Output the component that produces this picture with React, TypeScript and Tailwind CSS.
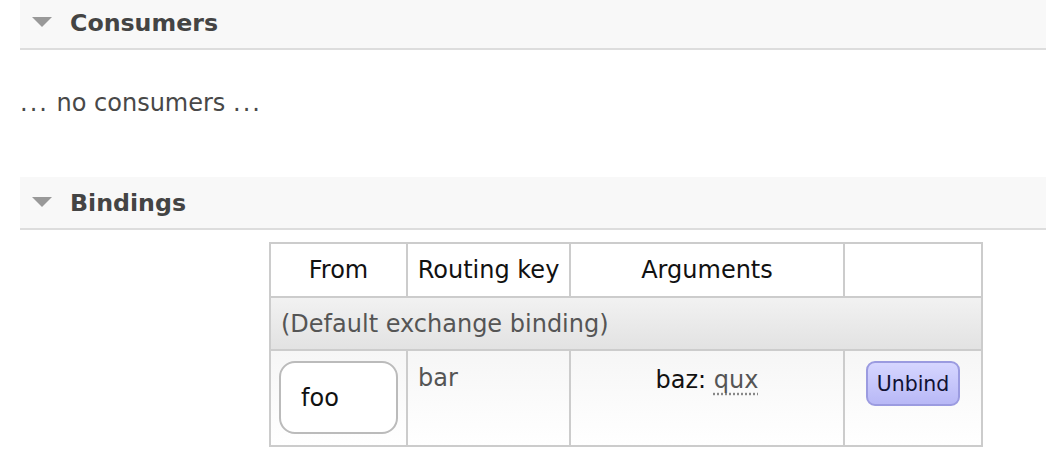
import React from 'react';

function SectionHeader({ title, className = '' }: { title: string; className?: string }) {
  return (
    <div className={`ml-[20px] h-[53px] flex items-center bg-[#f8f8f8] border-b-2 border-[#dddddd] ${className}`}>
      <svg width="20" height="11" viewBox="0 0 20 11" className="ml-[12px] mr-[18px]">
        <polygon points="0,0 20,0 10,10" fill="#999999" />
      </svg>
      <h2 className="font-bold text-[#444444] text-[23.7px]">{title}</h2>
    </div>
  );
}

export default function App() {
  return (
    <div
      className="bg-white w-[1046px] h-[468px] overflow-hidden text-[24px] leading-[28px] text-[#484848]"
      style={{ fontFamily: '"DejaVu Sans", Verdana, sans-serif' }}
    >
      {/* Consumers */}
      <SectionHeader title="Consumers" className="-mt-[3px]" />
      <p className="ml-[20px] mt-[39px]">
        <span className="tracking-[2px]">...</span> no consumers <span className="tracking-[2px]">...</span>
      </p>

      {/* Bindings */}
      <SectionHeader title="Bindings" className="mt-[60px]" />
      <table className="ml-[269px] mt-[12px] border-collapse border-2 border-[#cccccc]">
        <thead>
          <tr className="h-[54px] bg-white text-[#111111]">
            <th className="w-[137px] border-2 border-[#cccccc] font-normal">From</th>
            <th className="w-[163px] border-2 border-[#cccccc] font-normal">Routing key</th>
            <th className="w-[274px] border-2 border-[#cccccc] font-normal">Arguments</th>
            <th className="w-[138px] border-2 border-[#cccccc] font-normal"></th>
          </tr>
        </thead>
        <tbody>
          <tr className="h-[53px] bg-gradient-to-b from-[#f2f2f2] to-[#e2e2e2]">
            <td colSpan={4} className="border-2 border-[#cccccc] pl-[10px] text-[#555555]">
              (Default exchange binding)
            </td>
          </tr>
          <tr className="h-[96px] bg-gradient-to-b from-[#f6f6f6] to-white align-top">
            <td className="border-2 border-[#cccccc] pl-[8px] pt-[10px]">
              <div className="w-[119px] h-[73px] flex items-center pl-[20px] bg-white border-2 border-[#bbbbbb] rounded-[16px] text-[#111111]">
                foo
              </div>
            </td>
            <td className="border-2 border-[#cccccc] pl-[10px] pt-[13px] text-[#555555]">bar</td>
            <td className="border-2 border-[#cccccc] pt-[15px] text-center text-[#111111]">
              baz:{' '}
              <span className="text-[#555555] underline decoration-dotted decoration-[#888888] underline-offset-[5px]">
                qux
              </span>
            </td>
            <td className="border-2 border-[#cccccc] pt-[10px] text-center">
              <button className="w-[94px] h-[45px] rounded-[9px] border-2 border-[#9b9be0] bg-gradient-to-b from-[#d6d6ff] to-[#b8b8f6] text-[20.5px] text-[#111133]">
                Unbind
              </button>
            </td>
          </tr>
        </tbody>
      </table>
    </div>
  );
}
